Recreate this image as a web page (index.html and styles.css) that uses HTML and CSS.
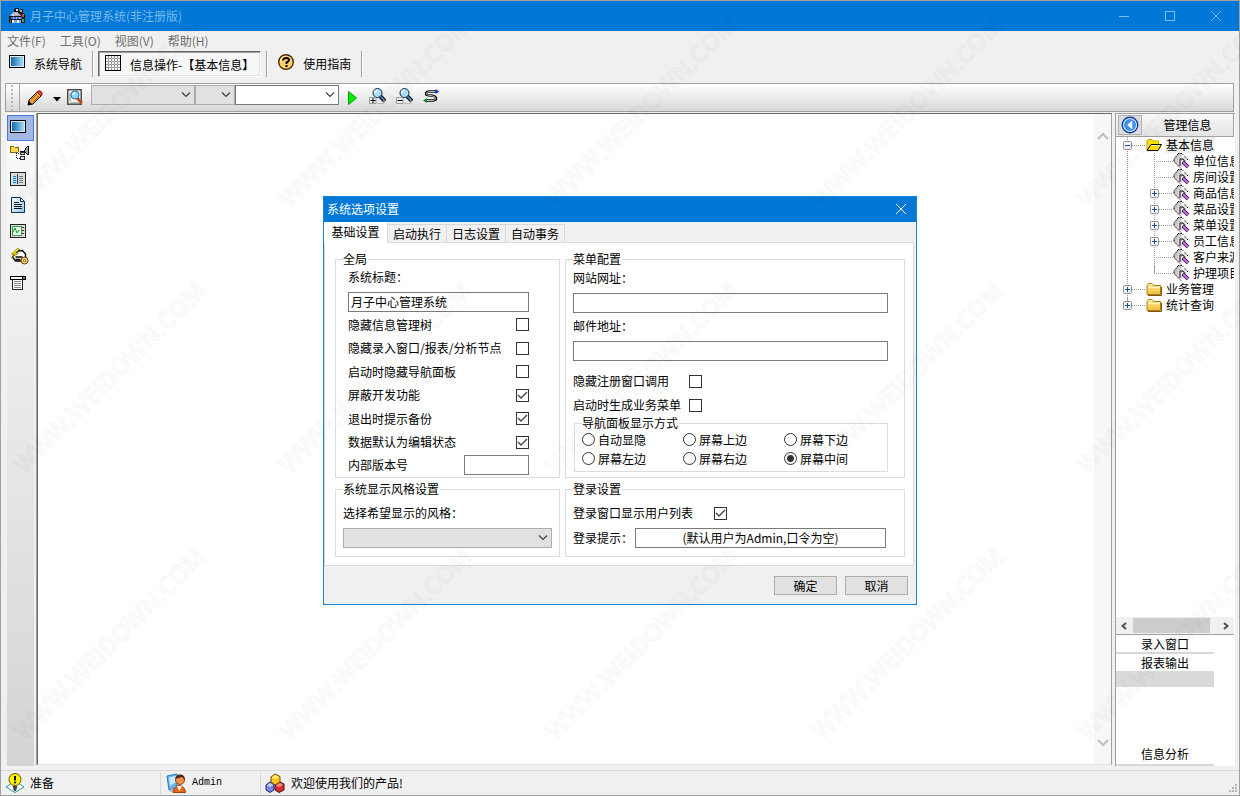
FILE: index.html
```html
<!DOCTYPE html>
<html lang="zh-CN">
<head>
<meta charset="utf-8">
<title>月子中心管理系统(非注册版)</title>
<link rel="stylesheet" href="styles.css">
</head>
<body>
<svg class="defs" aria-hidden="true">
  <defs>
    <linearGradient id="screen" x1="0" x2="1" y1="0" y2="0"><stop offset="0" stop-color="#1268a8"/><stop offset="1" stop-color="#a4dcf8"/></linearGradient>
    <linearGradient id="paper" x1="0" x2="1" y1="0" y2="1"><stop offset="0" stop-color="#fff"/><stop offset="1" stop-color="#8cc8f0"/></linearGradient>
    <linearGradient id="gold" x1="0" x2="0" y1="0" y2="1"><stop offset="0" stop-color="#fff2a0"/><stop offset="1" stop-color="#f0bc38"/></linearGradient>
    <linearGradient id="metal" x1="0" x2="1" y1="0" y2="1"><stop offset="0" stop-color="#b8b8b8"/><stop offset="1" stop-color="#f8f8f8"/></linearGradient>
    <symbol id="i-screen" viewBox="0 0 16 14"><rect x="0" y="0" width="16" height="13" fill="#000"/><rect x="1" y="1" width="14" height="11" fill="#d8ecf8"/><rect x="2" y="2" width="12" height="9" fill="url(#screen)"/></symbol>
    <symbol id="i-folder" viewBox="0 0 16 14"><path d="M1 12.500V4L2.500 1.500H6L7.500 3.500H14.500V12.500Z" fill="url(#gold)" stroke="#b07c10"/><path d="M2 5.500H14" stroke="#fff8cc"/><path d="M2 13.500H15.500V5" stroke="#7a5810" fill="none"/></symbol>
    <symbol id="i-open" viewBox="0 0 16 14"><path d="M1 12V3L2.500 1.500H6L7.500 3H12.500V6" fill="#ffe800" stroke="#c8a000"/><path d="M1 12.500L5 6.500H15.500L12 12.500Z" fill="#ffd800" stroke="#000"/><path d="M5 7.500H14" stroke="#fffbb0"/></symbol>
    <symbol id="i-tag" viewBox="0 0 17 16"><path d="M1 9V6L5 1H9L15 8L8 15Z" fill="url(#metal)"/><path d="M1 8.500L8 15.500M1 8V6L5 1M5 .5H9L15 7" fill="none" stroke="#000" stroke-dasharray="1.500 .8"/><path d="M7 13V6H10L11.500 8L9 10" fill="none" stroke="#111"/><path d="M10 9L15 14" stroke="#300040" stroke-width="3.500"/><path d="M10 9L15 14" stroke="#c870e0" stroke-width="2"/><circle cx="10" cy="3" r="1.500" fill="#fff"/></symbol>
    <symbol id="i-zoom" viewBox="0 0 17 17"><path d="M11 8L16 13" stroke="#000" stroke-width="4"/><path d="M11 8L15 12" stroke="#3878b8" stroke-width="2"/><circle cx="8.500" cy="5" r="4.500" fill="#a8e0ff" stroke="#14283c"/><path d="M6 5Q6 3 8 2.500" stroke="#fff" stroke-width="2" fill="none"/><path d="M.5 9.500H7V15.500H.5Z" fill="#eee" stroke="#999"/><path d="M8 15.500H15V11" fill="none" stroke="#bbb"/></symbol>
    <symbol id="i-plus" viewBox="0 0 9 9"><rect x=".5" y=".5" width="8" height="8" rx="1" fill="#f4f4f4" stroke="#919191"/><path d="M2 4.500H7M4.500 2V7" stroke="#1c4ca0"/></symbol>
    <symbol id="i-minus" viewBox="0 0 9 9"><rect x=".5" y=".5" width="8" height="8" rx="1" fill="#f4f4f4" stroke="#919191"/><path d="M2 4.500H7" stroke="#1c4ca0"/></symbol>
  </defs>
</svg>

<div class="window">
  <header class="titlebar">
    <svg class="app-icon" viewBox="0 0 16 16" shape-rendering="crispEdges"><path d="M0 15V9L2 6L5 3L6 0H10V3L12 1H14V5L16 7V15Z" fill="#181818"/><path d="M1 8L3 5L5 4H8L12 8Z" fill="#aaa4c4"/><path d="M7 1H9V3H7Z" fill="#e8e0f0"/><path d="M11 2H13V4H11Z" fill="#d8a048"/><path d="M3 6H5V8H3ZM6 5H8V7H6Z" fill="#d8d8ec"/><path d="M2 9H13V11H2Z" fill="#4868f0"/><path d="M3 12H5V15H3ZM8 12H10V15H8Z" fill="#f4f4ff"/><path d="M5 12H8V15H5ZM10 12H12V15H10Z" fill="#70a8f0"/><path d="M13 6H15V9H13Z" fill="#d05030"/><path d="M13 11H15V14H13Z" fill="#3cb048"/><path d="M1 12H2V15H1Z" fill="#a06030"/><path d="M4 9H5V11H4ZM7 9H8V11H7ZM10 9H11V11H10Z" fill="#b8c8ff"/></svg>
    <h1 class="title">月子中心管理系统(非注册版)</h1>
    <button class="caption" aria-label="最小化"><svg viewBox="0 0 10 10"><path d="M0 5.500H10"/></svg></button>
    <button class="caption" aria-label="最大化"><svg viewBox="0 0 10 10"><rect x=".5" y=".5" width="9" height="9"/></svg></button>
    <button class="caption" aria-label="关闭"><svg viewBox="0 0 10 10"><path d="M0 0L10 10M10 0L0 10"/></svg></button>
  </header>

  <nav class="menubar">
    <button>文件(F)</button><button>工具(O)</button><button>视图(V)</button><button>帮助(H)</button>
  </nav>

  <div class="navbar">
    <button class="nav-item"><svg class="i16 lift" viewBox="0 0 16 14"><use href="#i-screen"/></svg><span>系统导航</span></button>
    <i class="nav-sep"></i>
    <button class="nav-item pressed"><svg class="i16 lift" viewBox="0 0 16 16" shape-rendering="crispEdges"><rect x=".5" y=".5" width="15" height="15" fill="#f0f0f0" stroke="#000"/><path d="M3.500 1V15M6.500 1V15M9.500 1V15M12.500 1V15M1 3.500H15M1 6.500H15M1 9.500H15M1 12.500H15" stroke="#a0a0a0"/></svg><span>信息操作-【基本信息】</span></button>
    <i class="nav-sep"></i>
    <button class="nav-item guide"><svg class="i16 lift" viewBox="0 0 16 16"><circle cx="8" cy="8" r="7.300" fill="#fcd068" stroke="#502800" stroke-width="1.400"/><path d="M3 8Q3 3 8 2.500" stroke="#fff0b0" stroke-width="1.500" fill="none"/><path d="M5 6.500Q5 4 8 4Q11 4 11 6Q11 7.500 8.500 8.500V10" fill="none" stroke="#000" stroke-width="2"/><rect x="7.500" y="11" width="2" height="2"/></svg><span>使用指南</span></button>
    <i class="nav-sep"></i>
  </div>

  <div class="toolbar">
    <i class="grip"></i>
    <button class="tool pencil" aria-label="编辑"><svg viewBox="0 0 16 16"><path d="M1 15L2 10L10 2L14 6L6 14Z" fill="#f0a830" stroke="#000"/><path d="M4 10L10 4M6 12L12 6" stroke="#a05800"/><path d="M10 2L12 .8Q15 1 15.300 4L14 6Z" fill="#e84828" stroke="#801800"/><path d="M1 15L2 11L5 14Z"/></svg></button>
    <button class="tool drop" aria-label="更多编辑"><svg viewBox="0 0 8 5"><path d="M0 0H8L4 4.500Z"/></svg></button>
    <button class="tool find" aria-label="查找"><svg viewBox="0 0 16 16"><rect x=".7" y=".7" width="13.500" height="14.500" fill="#f0f0e8" stroke="#444" stroke-width="1.400"/><path d="M3 14H14M3 4V12" stroke="#888"/><path d="M10 9L15 14" stroke="#c05018" stroke-width="3"/><circle cx="8" cy="6" r="4" fill="#88dcff" stroke="#2870b0"/><path d="M6 6Q6 4 8 4" stroke="#fff" fill="none" stroke-width="1.500"/></svg></button>
    <div class="combos">
      <select class="combo wide" aria-label="字段" disabled><option></option></select>
      <select class="combo narrow" aria-label="条件" disabled><option></option></select>
      <select class="combo wide active" aria-label="内容"><option></option></select>
    </div>
    <button class="tool play" aria-label="执行"><svg viewBox="0 0 9 14"><path d="M.5 .5L8.500 7L.5 13.500Z" fill="#00f000" stroke="#00a000"/></svg></button>
    <button class="tool z" aria-label="放大"><svg viewBox="0 0 17 17"><use href="#i-zoom"/><path d="M1.500 12.500H6.500M4 10V15" stroke="#000"/></svg></button>
    <button class="tool z" aria-label="缩小"><svg viewBox="0 0 17 17"><use href="#i-zoom"/><path d="M1.500 12.500H6.500" stroke="#000"/></svg></button>
    <button class="tool z" aria-label="刷新"><svg viewBox="0 0 17 17"><path d="M13 3.500H7Q3 3.500 3 6Q3 7.500 8 7.500Q13 8 13 10.500Q13 12.500 9 12.500H3" fill="none" stroke="#000" stroke-width="2.600"/><path d="M12 3.500H7Q3.500 3.500 3.500 6Q3.500 7.500 8 7.500Q12.500 8 12.500 10.500Q12.500 12.500 9 12.500H4" fill="none" stroke="#eee" stroke-width=".8"/><path d="M12.500 1L16.500 3.500L12.500 6Z" fill="#1848e0"/><path d="M4 10L0 12.500L4 15Z" fill="#10901c"/></svg></button>
  </div>

  <div class="main">
    <nav class="sidebar">
      <button class="side on" aria-label="导航"><svg viewBox="0 0 16 14"><use href="#i-screen"/></svg></button>
      <button class="side" aria-label="结构"><svg class="big" viewBox="0 0 20 16" shape-rendering="crispEdges"><path d="M.5 1.500H4L5 2.500H8.500V7.500H.5Z" fill="#ffd850" stroke="#806000"/><path d="M6.500 9V14H10M6.500 9H10" stroke="#000" stroke-dasharray="1 1" fill="none"/><rect x="11.500" y="7.500" width="4" height="3" fill="#ddd" stroke="#222"/><rect x="11.500" y="12.500" width="4" height="3" fill="#ddd" stroke="#222"/><path d="M15 6L19 1V11Z" fill="#999" stroke="#000"/><path d="M11 6.500H15" stroke="#000"/></svg></button>
      <button class="side" aria-label="表单"><svg viewBox="0 0 16 14" shape-rendering="crispEdges"><rect x="0" y="0" width="16" height="14" fill="#222"/><rect x="1" y="1" width="14" height="12" fill="#ddd"/><rect x="2" y="3" width="5" height="9" fill="#c0e0ff"/><path d="M7.500 2V12" stroke="#333"/><path d="M3 4.500H6M3 6.500H6M3 8.500H6M3 10.500H6" stroke="#1878c0"/><path d="M9 4.500H13M9 6.500H13M9 8.500H13M9 10.500H13" stroke="#777"/></svg></button>
      <button class="side" aria-label="报表"><svg viewBox="0 0 16 16"><path d="M1.500 .5H10.500L14.500 4.500V15.500H1.500Z" fill="url(#paper)" stroke="#103050"/><path d="M10.500 1V4.500H14" fill="#fff" stroke="#103050"/><path d="M4 5.500H9M4 7.500H12M4 9.500H12M4 11.500H12" stroke="#111"/></svg></button>
      <button class="side" aria-label="分析"><svg viewBox="0 0 16 14" shape-rendering="crispEdges"><rect x="0" y="0" width="16" height="14" fill="#222"/><rect x="1" y="1" width="14" height="12" fill="#ddd"/><rect x="2" y="2" width="9" height="9" fill="#e8ffe8" stroke="#40a050"/><path d="M3 8L5 4L7 9L9 6" fill="none" stroke="#00a020" shape-rendering="auto"/><path d="M13 3V4M13 6V7M13 9V10" stroke="#333" stroke-width="2"/></svg></button>
      <button class="side" aria-label="处理"><svg class="big" viewBox="0 0 18 17"><path d="M7 3L12 2.500L15 6V13H5L2 9Z" fill="#fff" stroke="#000" stroke-width="1.400"/><path d="M5 9H12M5 11.500H10" stroke="#000" stroke-width="1.500"/><path d="M7 .5L1 6H4L1 10L8 5H5L9 1Z" fill="#ffec00" stroke="#665000" stroke-width=".6"/><circle cx="14" cy="12.500" r="3.500" fill="#ffd080" stroke="#604010"/><circle cx="14" cy="12.500" r="1.200" fill="#fff" stroke="#a06000"/></svg></button>
      <button class="side" aria-label="打印"><svg viewBox="0 0 16 16" shape-rendering="crispEdges"><rect x="0" y="1" width="16" height="4" fill="#000"/><rect x="1" y="2" width="11" height="2" fill="#f8f8f8"/><rect x="13" y="2" width="2" height="2" fill="#777"/><path d="M2 5V15H13V5Z" fill="#222"/><path d="M3 5V14H12V5Z" fill="#fff"/><path d="M4 6.500H11M4 8.500H11M4 10.500H11M4 12.500H11" stroke="#888"/></svg></button>
    </nav>

    <main class="workspace">
      <div class="vscroll">
        <svg viewBox="0 0 12 8"><path d="M1 7L6 2L11 7"/></svg>
        <svg viewBox="0 0 12 8"><path d="M1 1L6 6L11 1"/></svg>
      </div>
    </main>

    <aside class="panel">
      <div class="panel-head">
        <button class="back" aria-label="返回"><svg viewBox="0 0 16 16"><circle cx="8" cy="8" r="7.500" fill="#103c98"/><circle cx="8" cy="8" r="5.800" fill="#3c90e8" stroke="#d0ecff"/><path d="M10 4L5.500 8L10 12Z" fill="#fff"/></svg></button>
        <h2>管理信息</h2>
      </div>
      <ul class="tree">
        <li class="node"><svg class="exp" viewBox="0 0 9 9"><use href="#i-minus"/></svg><i class="dots"></i><svg class="fold" viewBox="0 0 16 14"><use href="#i-open"/></svg><span class="sel">基本信息</span>
          <ul class="sub">
            <li class="leaf"><i class="dots long"></i><svg class="tag" viewBox="0 0 17 16"><use href="#i-tag"/></svg>单位信息</li>
            <li class="leaf"><i class="dots long"></i><svg class="tag" viewBox="0 0 17 16"><use href="#i-tag"/></svg>房间设置</li>
            <li class="leaf"><svg class="exp" viewBox="0 0 9 9"><use href="#i-plus"/></svg><i class="dots"></i><svg class="tag" viewBox="0 0 17 16"><use href="#i-tag"/></svg>商品信息</li>
            <li class="leaf"><svg class="exp" viewBox="0 0 9 9"><use href="#i-plus"/></svg><i class="dots"></i><svg class="tag" viewBox="0 0 17 16"><use href="#i-tag"/></svg>菜品设置</li>
            <li class="leaf"><svg class="exp" viewBox="0 0 9 9"><use href="#i-plus"/></svg><i class="dots"></i><svg class="tag" viewBox="0 0 17 16"><use href="#i-tag"/></svg>菜单设置</li>
            <li class="leaf"><svg class="exp" viewBox="0 0 9 9"><use href="#i-plus"/></svg><i class="dots"></i><svg class="tag" viewBox="0 0 17 16"><use href="#i-tag"/></svg>员工信息</li>
            <li class="leaf"><i class="dots long"></i><svg class="tag" viewBox="0 0 17 16"><use href="#i-tag"/></svg>客户来源</li>
            <li class="leaf"><i class="dots long"></i><svg class="tag" viewBox="0 0 17 16"><use href="#i-tag"/></svg>护理项目</li>
          </ul>
        </li>
        <li class="node"><svg class="exp" viewBox="0 0 9 9"><use href="#i-plus"/></svg><i class="dots"></i><svg class="fold" viewBox="0 0 16 14"><use href="#i-folder"/></svg><span>业务管理</span></li>
        <li class="node"><svg class="exp" viewBox="0 0 9 9"><use href="#i-plus"/></svg><i class="dots"></i><svg class="fold" viewBox="0 0 16 14"><use href="#i-folder"/></svg><span>统计查询</span></li>
      </ul>
      <div class="hscroll">
        <svg viewBox="0 0 6 8"><path d="M5 1L1.500 4L5 7"/></svg>
        <i class="thumb"></i>
        <svg viewBox="0 0 6 8"><path d="M1 1L4.500 4L1 7"/></svg>
      </div>
      <div class="stack">
        <button>录入窗口</button>
        <button>报表输出</button>
        <i class="block"></i>
        <button class="last">信息分析</button>
      </div>
    </aside>
  </div>

  <footer class="status">
    <div class="cell"><svg viewBox="0 0 20 20"><path d="M10 8L19 14L10 19.500L1 14Z" fill="#fff" stroke="#209898"/><circle cx="10" cy="6.500" r="6" fill="#fff000" stroke="#605800"/><path d="M10 3V7.500M10 8.700V10.200" stroke="#000" stroke-width="2"/><path d="M7.500 13H12.500L11 18H9Z" fill="#444"/></svg><span>准备</span></div>
    <div class="cell user"><svg viewBox="0 0 20 20"><path d="M1 3L11 1V15L3 17Z" fill="#68b4f0" stroke="#2878c0"/><path d="M3 4.500L10 3V9L4 13Z" fill="#c8ecff"/><path d="M3 17L8 16V19H4Z" fill="#a8c8e0"/><circle cx="14" cy="7" r="4.500" fill="#f09048" stroke="#a04010"/><path d="M9 6Q10 1 15 1.500Q19 2 19 7L16 4Z" fill="#502818"/><path d="M7 19.500Q8 13 13 12.500Q19 13 19.500 19.500Z" fill="#e86818" stroke="#a84008"/><path d="M11 13L13.500 18L16 13Z" fill="#fff"/></svg><span class="mono">Admin</span></div>
    <div class="cell grow"><svg viewBox="0 0 20 20"><path d="M1 12L5 9L9 11V17L5 19.500L1 17Z" fill="#7888e0" stroke="#202868"/><path d="M10 12L15 9L19 11V17L14 19.500L10 17Z" fill="#d83030" stroke="#580808"/><path d="M6 4L10 1L15 3.500V9L10 12L6 9Z" fill="#ffc820" stroke="#705000"/><path d="M7 4.500L10 6L14 4L10 2Z" fill="#fff080"/><path d="M2 12.500L5 14L8 12L5 10Z" fill="#c8d0ff"/><path d="M11 12.500L14 14L18 12L15 10Z" fill="#f89090"/></svg><span>欢迎使用我们的产品!</span></div>
    <svg class="resize" viewBox="0 0 9 9"><path d="M6 0H8V2H6ZM3 3H5V5H3ZM6 3H8V5H6ZM0 6H2V8H0ZM3 6H5V8H3ZM6 6H8V8H6Z" fill="#b4b4b4"/></svg>
  </footer>
</div>

<section class="dialog" role="dialog" aria-label="系统选项设置">
  <header class="dialog-title">
    <h2>系统选项设置</h2>
    <button aria-label="关闭"><svg viewBox="0 0 10 10"><path d="M0 0L10 10M10 0L0 10"/></svg></button>
  </header>
  <div class="tabs" role="tablist">
    <button class="tab on" role="tab">基础设置</button><button class="tab" role="tab">启动执行</button><button class="tab" role="tab">日志设置</button><button class="tab" role="tab">自动事务</button>
  </div>
  <form class="page" id="options">
    <fieldset class="group">
      <legend>全局</legend>
      <div class="global">
        <label for="sys-title">系统标题：</label>
        <input class="text" id="sys-title" type="text" value="月子中心管理系统">
        <div class="checks">
          <label>隐藏信息管理树<input type="checkbox"></label>
          <label>隐藏录入窗口/报表/分析节点<input type="checkbox"></label>
          <label>启动时隐藏导航面板<input type="checkbox"></label>
          <label>屏蔽开发功能<input type="checkbox" checked></label>
          <label>退出时提示备份<input type="checkbox" checked></label>
          <label>数据默认为编辑状态<input type="checkbox" checked></label>
        </div>
        <label class="version">内部版本号<input class="text short" type="text"></label>
      </div>
    </fieldset>

    <fieldset class="group">
      <legend>菜单配置</legend>
      <div class="menu-set">
        <div class="field">
          <label for="site">网站网址：</label>
          <input class="text" id="site" type="text">
        </div>
        <div class="field">
          <label for="mail">邮件地址：</label>
          <input class="text" id="mail" type="text">
        </div>
        <div class="pairs">
          <label><span>隐藏注册窗口调用</span><input type="checkbox"></label>
          <label><span>启动时生成业务菜单</span><input type="checkbox"></label>
        </div>
        <fieldset class="group radios">
          <legend>导航面板显示方式</legend>
          <div class="radio-grid">
            <label><input type="radio" name="pos">自动显隐</label>
            <label><input type="radio" name="pos">屏幕上边</label>
            <label><input type="radio" name="pos">屏幕下边</label>
            <label><input type="radio" name="pos">屏幕左边</label>
            <label><input type="radio" name="pos">屏幕右边</label>
            <label><input type="radio" name="pos" checked>屏幕中间</label>
          </div>
        </fieldset>
      </div>
    </fieldset>

    <fieldset class="group">
      <legend>系统显示风格设置</legend>
      <div class="lower">
        <label for="style">选择希望显示的风格：</label>
        <select class="combo" id="style" disabled><option></option></select>
      </div>
    </fieldset>

    <fieldset class="group">
      <legend>登录设置</legend>
      <div class="lower login">
        <label class="users"><span>登录窗口显示用户列表</span><input type="checkbox" checked></label>
        <label class="hint"><span>登录提示：</span><input class="text center" type="text" value="(默认用户为Admin,口令为空)"></label>
      </div>
    </fieldset>
  </form>
  <footer class="actions">
    <button type="submit" form="options">确定</button>
    <button type="button">取消</button>
  </footer>
</section>

<svg class="watermark" aria-hidden="true">
  <defs><pattern id="mark" x="8" y="209" width="266" height="266" patternUnits="userSpaceOnUse"><text x="0" y="0" transform="translate(16 266) rotate(-45)">WWW.WEIDOWN.COM</text></pattern></defs>
  <rect width="100%" height="100%" fill="url(#mark)"/>
</svg>
</body>
</html>
```
FILE: styles.css
```css
* { box-sizing: border-box; }
body {
  margin: 0;
  font: 12px/14px "Noto Sans CJK SC", sans-serif;
  color: #000;
  background: #f0f0f0;
}
button, input, select { font: inherit; color: inherit; margin: 0; padding: 0; }
button { border: 0; background: none; white-space: nowrap; }
h1, h2 { margin: 0; font-size: 12px; font-weight: 400; }
ul { list-style: none; margin: 0; padding: 0; }
svg { display: block; flex: none; }
.defs { position: absolute; width: 0; height: 0; }

.window {
  display: flex;
  flex-direction: column;
  height: 100vh;
  overflow: hidden;
  border: 1px solid #a0a0a0;
  background: #f0f0f0;
}
.titlebar {
  display: flex;
  align-items: center;
  flex: 0 0 30px;
  padding-left: 8px;
  background: #0078d7;
}
.app-icon { width: 16px; height: 16px; }
.title { flex: 1; margin-left: 5px; color: #7db9ea; }
.caption { display: grid; place-items: center; width: 46px; height: 30px; }
.caption svg { width: 10px; height: 10px; fill: none; stroke: #80bceb; }

.menubar {
  display: flex;
  flex: 0 0 20px;
  gap: 14px;
  padding-left: 6px;
  color: #6d6d6d;
}

/* navigation buttons */
.navbar { display: flex; flex: 0 0 27px; gap: 5px; padding-left: 4px; }
.nav-item { display: flex; align-items: center; gap: 9px; height: 26px; padding: 0 5px 0 4px; }
.nav-item.pressed {
  padding: 2px 6px 0;
  border: 1px solid;
  border-color: #696969 #fff #fff #696969;
  box-shadow: inset 1px 1px #a0a0a0, inset -1px -1px #e3e3e3;
  background: #f7f7f7;
}
.nav-item.guide { padding-left: 6px; }
.nav-sep { width: 1px; height: 26px; background: #a0a0a0; box-shadow: 1px 0 #fff; }
.i16 { width: 16px; height: 16px; }
.lift { margin-bottom: 5px; }

/* query toolbar */
.toolbar {
  display: flex;
  align-items: center;
  flex: 0 0 29px;
  margin: 5px 5px 0 4px;
  border: 1px solid #a0a0a0;
  background: linear-gradient(#fff, #e8e8e8 60%, #d8d8d8);
}
.grip {
  align-self: stretch;
  width: 14px;
  margin-right: 7px;
  border-right: 1px solid #a8a8a8;
  background: radial-gradient(circle, #b8b8b8 1px, transparent 1px) 4px 0 / 4px 4px repeat-y;
}
.tool { display: grid; place-items: center; height: 20px; }
.pencil { width: 16px; }
.pencil svg, .find svg { width: 16px; height: 16px; }
.drop { width: 8px; margin: 4px 6px 0 10px; }
.drop svg { width: 8px; height: 5px; }
.find { width: 16px; margin-bottom: 2px; }
.combos { display: flex; align-self: flex-start; margin: 1px 9px 0 8px; }
.combo {
  appearance: none;
  height: 20px;
  border: 1px solid #adadad;
  border-radius: 0;
  background: #e1e1e1 url("data:image/svg+xml,%3Csvg xmlns='http://www.w3.org/2000/svg' width='10' height='6'%3E%3Cpath d='M1 .5L5 4.500L9 .5' fill='none' stroke='%23404040' stroke-width='1.200'/%3E%3C/svg%3E") right 3px center no-repeat;
  opacity: 1;
}
.combo.wide { width: 104px; }
.combo.narrow { width: 40px; }
.combo.active { border-color: #7a7a7a; background-color: #fff; }
.play { width: 9px; margin-right: 12px; }
.play svg { width: 9px; height: 14px; }
.z { width: 17px; margin: 0 10px 2px 0; }
.z svg { width: 17px; height: 17px; }

/* main area */
.main { display: flex; flex: 1; min-height: 0; padding: 1px 4px 0 6px; }
.sidebar { flex: 0 0 27px; padding-top: 2px; margin-right: 3px; background: linear-gradient(#fbfbfb, #d4d4d4); }
.side { display: grid; place-items: center; width: 27px; height: 26px; padding: 0 5px 3px 0; }
.side svg { width: 16px; height: 16px; }
.side svg.big { width: 19px; height: 17px; margin-left: 3px; }
.side.on { border: 1px solid #4a78d8; background: #a4b6e2; }
.workspace {
  display: flex;
  justify-content: flex-end;
  flex: 1;
  min-width: 0;
  margin-bottom: 1px;
  border: 1px solid;
  border-color: #696969 #a0a0a0 #e3e3e3 #696969;
  box-shadow: -1px 0 #a0a0a0;
  background: #fff;
}
.vscroll {
  display: flex;
  flex-direction: column;
  justify-content: space-between;
  align-items: center;
  width: 17px;
  padding: 18px 0 17px;
  background: #f7f7f7;
}
.vscroll svg { width: 12px; height: 8px; fill: none; stroke: #bfbfbf; stroke-width: 2; }

/* right panel */
.panel {
  display: flex;
  flex-direction: column;
  flex: 0 0 120px;
  margin-left: 3px;
  border-left: 1px solid #a0a0a0;
  border-top: 1px solid #a0a0a0;
  background: #fff;
  overflow: hidden;
}
.panel-head {
  display: flex;
  align-items: center;
  flex: 0 0 23px;
  margin-right: 1px;
  border-bottom: 1px solid #a0a0a0;
  border-right: 1px solid #a0a0a0;
  background: linear-gradient(#f8f8f8, #e4e4e4);
}
.panel-head h2 { flex: 1; text-align: center; }
.back { display: grid; place-items: center; width: 24px; height: 20px; margin-left: 2px; border: 1px solid #b0b0b0; background: #dcdcdc; }
.back svg { width: 18px; height: 18px; }
.tree { flex: 1; min-height: 0; margin-right: 1px; padding-left: 7px; overflow: hidden; white-space: nowrap; line-height: 16px; }
.node { display: grid; grid-template-columns: 9px 14px 16px max-content; align-items: center; background: linear-gradient(#999 50%, transparent 50%) 4px 0 / 1px 2px repeat-y; }
.node:last-child { background: linear-gradient(#999, #999) 4px 0 / 1px 8px no-repeat; }
.node > span { justify-self: start; margin-left: 3px; padding: 0 1px; }
.sel { background: #f0f0f0; }
.exp { width: 9px; height: 9px; }
.dots { height: 1px; background: repeating-linear-gradient(90deg, #999 0 1px, transparent 1px 2px); }
.fold { width: 16px; height: 14px; }
.sub { grid-column: 1 / -1; margin-left: 27px; }
.leaf { display: flex; align-items: center; height: 16px; background: linear-gradient(#999 50%, transparent 50%) 4px 0 / 1px 2px repeat-y; }
.leaf:last-child { background: linear-gradient(#999, #999) 4px 0 / 1px 8px no-repeat; }
.leaf .dots { width: 14px; }
.leaf .dots.long { width: 19px; margin-left: 4px; }
.tag { width: 17px; height: 16px; margin-right: 3px; }
.hscroll { display: flex; align-items: center; flex: 0 0 18px; margin-right: 1px; padding: 0 5px; border-bottom: 1px solid #a0a0a0; background: #f0f0f0; }
.hscroll svg { width: 6px; height: 8px; fill: none; stroke: #505050; stroke-width: 2; }
.thumb { flex: 1; align-self: stretch; margin: 1px 13px 1px 6px; background: #cdcdcd; }
.stack { display: flex; flex-direction: column; flex: 0 0 131px; width: 98px; }
.stack button { flex: 0 0 19px; border-bottom: 2px solid #d9d9d9; }
.block { flex: 0 0 14px; background: #d9d9d9; }
.stack .last { margin-top: auto; flex-basis: 22px; }

/* status bar */
.status { display: flex; align-items: center; flex: 0 0 25px; margin-top: 4px; border-top: 1px solid #d7d7d7; }
.cell { display: flex; align-items: center; gap: 5px; width: 160px; height: 22px; padding-left: 4px; border-right: 1px solid #d7d7d7; }
.cell svg { width: 20px; height: 20px; }
.cell.user { width: 100px; gap: 6px; padding-left: 5px; }
.cell.grow { flex: 1; gap: 6px; border: 0; }
.mono { font-family: "Liberation Mono", monospace; font-size: 10px; }
.resize { width: 9px; height: 9px; margin: 10px 1px 0 0; }

/* options dialog */
.dialog { position: absolute; top: 196px; left: calc(50% - 297px); width: 594px; border: 1px solid #1883d7; background: #f0f0f0; }
.dialog-title { display: flex; align-items: center; justify-content: space-between; height: 25px; padding: 0 10px 1px 3px; color: #fff; background: #0078d7; }
.dialog-title svg { width: 10px; height: 10px; fill: none; stroke: #fff; }
.tabs { display: flex; align-items: flex-end; height: 20px; }
.tab { width: 59px; height: 18px; border: 1px solid #d9d9d9; border-width: 1px 1px 0 0; }
.tab.on { position: relative; width: 64px; height: 21px; margin-bottom: -1px; padding-bottom: 2px; border-color: #fff #d9d9d9; background: #fff; }
.page {
  display: grid;
  grid-template-columns: 225fr 340fr;
  gap: 4px 5px;
  margin-right: 2px;
  padding: 9px 8px 8px 10px;
  border: 1px solid #dcdcdc;
  background: #fff;
}
.group { min-width: 0; margin: 0; padding: 0 7px; border: 1px solid #dcdcdc; }
.group legend { padding: 0 1px 0 0; line-height: 14px; }
.text { width: 100%; height: 20px; padding: 0 2px 2px; border: 1px solid #7a7a7a; background: #fff; border-radius: 0; outline: 0; }
input[type="checkbox"], input[type="radio"] { appearance: none; flex: none; width: 13px; height: 13px; border: 1px solid #333; background: #fff center no-repeat; }
input[type="checkbox"]:checked { background-image: url("data:image/svg+xml,%3Csvg xmlns='http://www.w3.org/2000/svg' width='11' height='11'%3E%3Cpath d='M1 5L4 8L10 2' fill='none' stroke='%23444' stroke-width='1.400'/%3E%3C/svg%3E"); }
input[type="radio"] { border-radius: 50%; }
input[type="radio"]:checked { background-image: radial-gradient(circle, #333 3px, transparent 4px); }
.global { display: flex; flex-direction: column; gap: 8px; padding: 4px 23px 2px 5px; }
.checks { display: grid; height: 141px; margin: -7px 0; }
.checks label, .version { display: flex; align-items: center; justify-content: space-between; }
.text.short { width: 65px; }
.menu-set { display: grid; gap: 6px; padding: 5px 9px 3px 0; }
.field { display: grid; gap: 8px; }
.pairs { padding-top: 2px; }
.pairs label { display: grid; grid-template-columns: 116px 13px; align-items: center; height: 24px; white-space: nowrap; }
.radios { margin: -7px 0 0 1px; }
.radio-grid { display: grid; grid-template-columns: repeat(3, 101px); grid-auto-rows: 19px; padding-bottom: 3px; }
.radio-grid label { display: flex; align-items: center; gap: 3px; }
.lower { display: grid; gap: 8px; padding: 10px 0 8px; }
.users { display: grid; grid-template-columns: 141px 13px; align-items: center; }
.hint { display: grid; grid-template-columns: 62px 1fr; align-items: center; padding-right: 11px; }
.center { text-align: center; }
.actions { display: flex; justify-content: flex-end; gap: 8px; padding: 10px 8px 9px; }
.actions button { width: 63px; height: 19px; border: 1px solid #adadad; background: #e1e1e1; }

.watermark { position: fixed; inset: 0; width: 100%; height: 100%; pointer-events: none; }
.watermark text { font: 600 24px "Open Sans", sans-serif; fill: #000; fill-opacity: .008; stroke: #000; stroke-opacity: .028; stroke-width: 1; }
```
